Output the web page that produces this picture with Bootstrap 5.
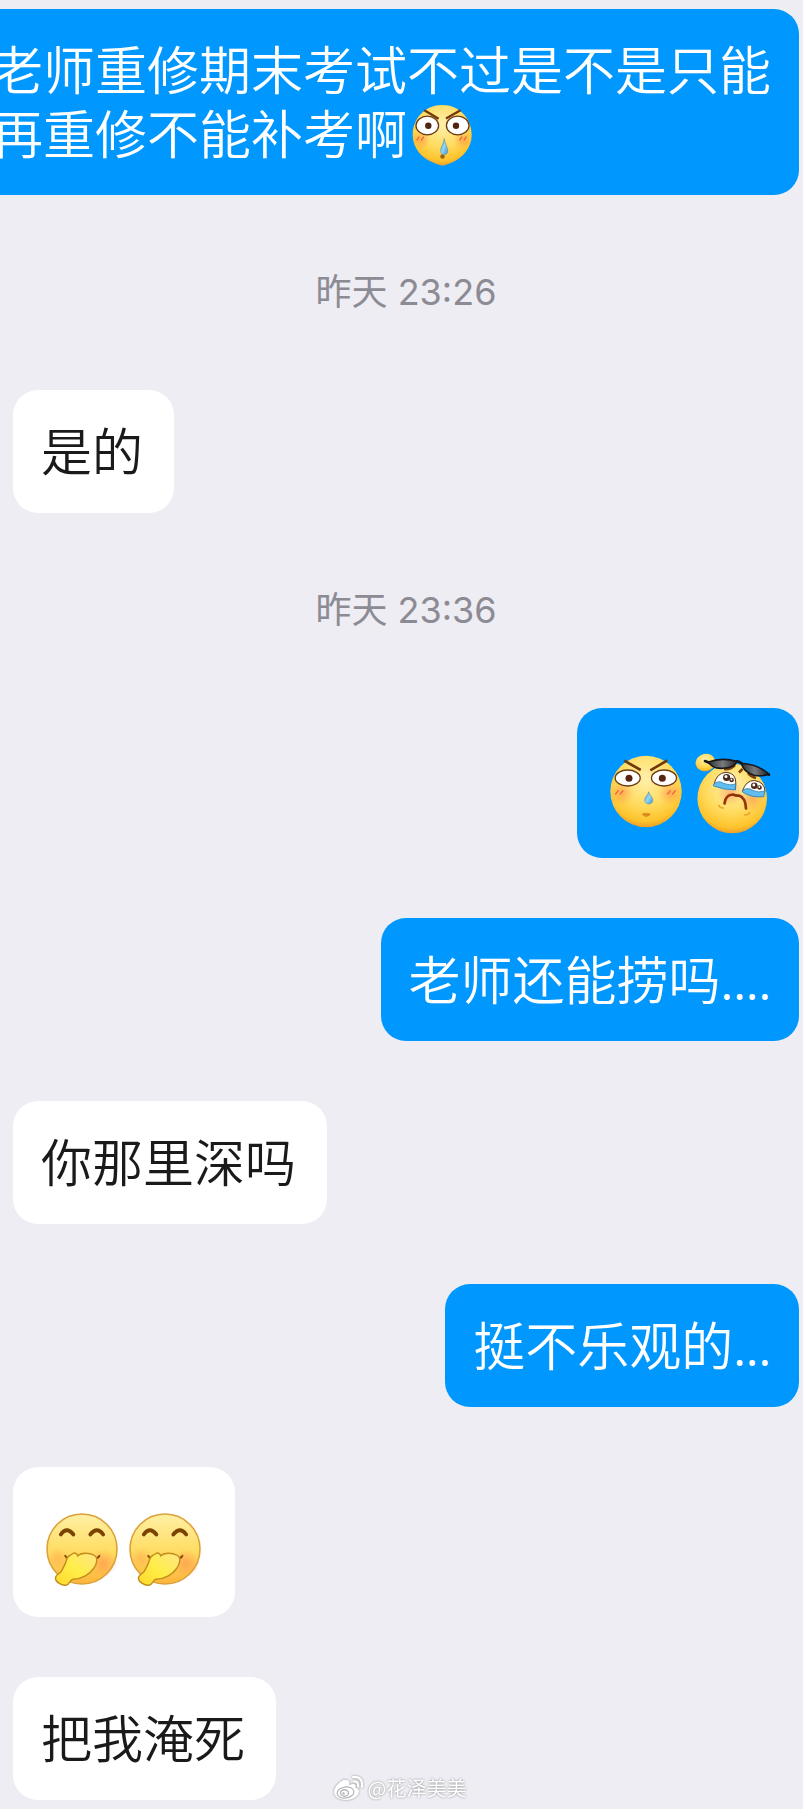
<!DOCTYPE html>
<html lang="zh-CN">
<head>
<meta charset="utf-8">
<meta name="viewport" content="width=device-width, initial-scale=1">
<title>聊天</title>
<link href="https://cdn.jsdelivr.net/npm/bootstrap@5.3.0/dist/css/bootstrap.min.css" rel="stylesheet">
<style>
  body { background: #eeedf3; font-family: "Noto Sans CJK SC", sans-serif; }
  .chat { padding: 9px 4px 9px 13px; gap: 60px; }
  .bubble { padding: 27px 28px 31px; border-radius: 25px; font-size: 52px; line-height: 65px; white-space: nowrap; font-weight: 350; }
  .bubble-in { background: #fff; color: #1a1a1a; font-size: 51px; padding-right: 31px; }
  .bubble-out { background: #0097ff; color: #fff; }
  .bubble-multi { line-height: 64px; }
  .bubble-faces { padding: 29px 28px; }
  .dots { font-family: "Open Sans", sans-serif; font-size: 48px; line-height: 1; font-weight: 400; }
  .stamp { font-family: Inter, "Noto Sans CJK SC", sans-serif; font-size: 36px; line-height: 75px; color: #8c8b93; font-weight: 400; }
  .face { width: 83px; height: 92px; overflow: visible; }
  .face-inline { width: 60px; height: 62px; margin: -15px 0 -5px 5px; overflow: visible; }
  .watermark { bottom: 6px; gap: 4px; padding-right: 4px; font-size: 20px; line-height: 30px; color: #fff; filter: drop-shadow(0 0 1px #8a8a8a); }
</style>
</head>
<body>
<svg width="0" height="0" class="position-absolute" aria-hidden="true">
  <defs>
    <radialGradient id="skin" cx="50%" cy="32%" r="68%">
      <stop offset="0" stop-color="#fff0ae"/><stop offset=".55" stop-color="#ffdc60"/><stop offset=".88" stop-color="#fdc32c"/><stop offset="1" stop-color="#ee9f28"/>
    </radialGradient>
    <linearGradient id="warm" x1="0" y1="0" x2="0" y2="1">
      <stop offset="0" stop-color="#fff0a6"/><stop offset=".55" stop-color="#ffdc60"/><stop offset="1" stop-color="#fdb53c"/>
    </linearGradient>
    <linearGradient id="hand" x1="0" y1="1" x2="1" y2="0">
      <stop offset="0" stop-color="#ffd92a"/><stop offset=".5" stop-color="#ffee4a"/><stop offset="1" stop-color="#ffe48a"/>
    </linearGradient>
    <linearGradient id="drop" x1="0" y1="0" x2="1" y2="1">
      <stop offset="0" stop-color="#5a9fb9"/><stop offset=".5" stop-color="#8fd7fa"/><stop offset="1" stop-color="#3c93d0"/>
    </linearGradient>
    <linearGradient id="lens" x1="0" y1="0" x2="1" y2="0">
      <stop offset="0" stop-color="#333"/><stop offset=".5" stop-color="#777b80"/><stop offset="1" stop-color="#222"/>
    </linearGradient>
    <radialGradient id="blush"><stop offset="0" stop-color="#ff884f" stop-opacity=".55"/><stop offset="1" stop-color="#ff884f" stop-opacity="0"/></radialGradient>
    <symbol id="giggle" viewBox="0 0 83 92" overflow="visible">
      <circle cx="41" cy="53" r="35" fill="url(#warm)" stroke="#dca23a" stroke-width="1.6"/>
      <circle cx="62" cy="67" r="14" fill="url(#blush)"/><circle cx="17" cy="62" r="11" fill="url(#blush)" opacity=".6"/>
      <path d="M19.8 38.5Q25.7 30 32.4 38.5M49.3 38.5Q56 30 62.2 38.5" fill="none" stroke="#7b4300" stroke-width="3.8" stroke-linecap="round"/>
      <path d="M24.5 60.5Q41 73 57.7 60.5" fill="none" stroke="#a4631b" stroke-width="1.4"/>
      <path d="M24.2 59.8l1.4 2M58.4 59.8l-1.6 2" stroke="#8a4c0b" stroke-width="2" stroke-linecap="round"/>
      <path d="M25.5 64C26 60 28.5 60 31.500 57.8C34 55.800 36.500 58 36.500 60C40 56.500 48 56.500 53.500 59.500C57.500 62 56 67 53 72C49 78 41 83 32 83.300C29 83.500 29 88.500 25 89.200C20.500 89.600 14 86 14.500 81.500C15.500 77.500 19 78 20.500 75C22.500 71 24.500 68 25.500 64Z" fill="url(#hand)" stroke="#c48c1a" stroke-width="1.4" stroke-linejoin="round"/>
    </symbol>
  </defs>
</svg>

<main class="chat position-relative d-flex flex-column overflow-hidden">
  <div class="d-flex justify-content-end">
    <div class="bubble bubble-out bubble-multi flex-shrink-0">老师重修期末考试不过是不是只能<br>再重修不能补考啊<svg class="face-inline align-middle" viewBox="0 0 60 62" role="img" aria-label="流鼻涕">
        <path d="M30.200 1C47 1 59.700 14 59.700 31C59.700 44 50 54 41 58C36 60 33 61.500 30.500 61.500C28 61.500 25 60 20 58C10 54 .7 44 .7 31C.7 14 13.500 1 30.200 1Z" fill="url(#skin)"/>
        <circle cx="9" cy="36" r="9" fill="url(#blush)"/><circle cx="51" cy="36" r="9" fill="url(#blush)"/>
        <g fill="#fff" stroke="#6b3a12" stroke-width="1.300"><ellipse cx="15.300" cy="21.500" rx="11.300" ry="9.300"/><ellipse cx="45.700" cy="21.500" rx="11.300" ry="9.300"/></g>
        <circle cx="16.300" cy="21.700" r="3.200" fill="#502411"/><circle cx="44" cy="21.700" r="3.200" fill="#502411"/>
        <path d="M12.300 6.300L26.600 14.800M48.500 6.300L34 14.600" stroke="#71380b" stroke-width="2.300"/>
        <path d="M4.700 36.300l2.500-3.600M9.300 36.300l2.500-3.600M47.500 36.300l2.500-3.600M52 36.300l2.500-3.600" stroke="#e8643c" stroke-width="1.200"/>
        <circle cx="30.500" cy="52.500" r="2.200" fill="#a1600f"/>
        <path d="M32.200 34.500C33 40 35.800 43 35.800 47C35.800 52 28.600 52 28.600 47C28.600 43 31.500 40 32.200 34.500Z" fill="url(#drop)" stroke="#62808c" stroke-width=".5"/>
      </svg></div>
  </div>

  <time class="stamp text-center">昨天 23:26</time>

  <div class="d-flex"><div class="bubble bubble-in">是的</div></div>

  <time class="stamp text-center">昨天 23:36</time>

  <div class="d-flex justify-content-end">
    <div class="bubble bubble-out bubble-faces d-flex">
      <svg class="face" viewBox="0 0 83 92" role="img" aria-label="流鼻涕">
        <circle cx="41" cy="54.500" r="35.700" fill="url(#skin)"/>
        <circle cx="17" cy="56" r="12" fill="url(#blush)"/><circle cx="65" cy="56" r="12" fill="url(#blush)"/>
        <g fill="#fff" stroke="#6b3a12" stroke-width="1.300"><ellipse cx="22.700" cy="41" rx="12.500" ry="8"/><ellipse cx="59" cy="41" rx="12.500" ry="8"/></g>
        <circle cx="24" cy="41.300" r="3.500" fill="#582412"/><circle cx="57.300" cy="41.300" r="3.500" fill="#582412"/>
        <path d="M19.300 23.700L35.700 33M62.300 23.500L45.300 33.300" stroke="#71380b" stroke-width="2.600"/>
        <path d="M10.300 57.300l3.200-4M15 57.300l3.200-4M62.300 57.300l3.200-4M67.300 57.300l3.200-4" stroke="#e8643c" stroke-width="1.300"/>
        <path d="M43.700 54.800C44.700 58.500 47.800 60 47.800 63.300C47.800 68.200 39.600 68.200 39.600 63.300C39.600 60 42.700 58.500 43.700 54.800Z" fill="url(#drop)" stroke="#62808c" stroke-width=".5"/>
        <path d="M36.800 77Q39.500 75.300 41.300 76.300Q43 75.300 45.800 77Q41.300 83 36.800 77Z" fill="#d98b1d"/>
      </svg>
      <svg class="face" viewBox="0 0 83 92" role="img" aria-label="墨镜流泪">
        <ellipse cx="17.500" cy="25.500" rx="10" ry="8.600" transform="rotate(-12 17.500 25.500)" fill="url(#skin)"/>
        <circle cx="44.200" cy="61.500" r="34.800" fill="url(#skin)"/>
        <circle cx="42" cy="56" r="13" fill="url(#blush)"/><circle cx="64" cy="62" r="12" fill="url(#blush)"/>
        <path d="M36 32Q42 33 47 28M51 35.500L54.500 32M60 36Q63 40 68 41" fill="none" stroke="#7a4210" stroke-width="2.600"/>
        <path d="M26 47.500Q28.500 36 38 35.300Q47.500 36 47.800 45L47.500 52.500Q36 52 26 47.500Z" fill="#fff" stroke="#5c3418" stroke-width="1"/>
        <path d="M25.500 47.500Q30 42.500 36 46.500Q42 49 47.700 47L47.300 52.900Q36 53 25.500 49Z" fill="#61bdf0" stroke="#2d7fad" stroke-width=".8"/>
        <path d="M54.500 54Q58 43.200 66.500 43.500Q76.500 45 77 54Q74 59.800 70 59.500Q60 58.500 54.500 54Z" fill="#fff" stroke="#5c3418" stroke-width="1"/>
        <path d="M54.500 54Q59 49.500 65 53.500Q70 56 77 54L75.800 59.700Q63 61 54.500 55Z" fill="#61bdf0" stroke="#2d7fad" stroke-width=".8"/>
        <g fill="#4e2a18"><circle cx="38.600" cy="40.500" r="3.600"/><circle cx="43.600" cy="43" r="2.300"/><circle cx="66.300" cy="48.800" r="3.300"/><circle cx="71.500" cy="50.500" r="2.300"/></g>
        <g fill="#fff"><circle cx="38" cy="39.500" r="1.500"/><circle cx="43.500" cy="42.500" r=".9"/><circle cx="65.800" cy="48" r="1.400"/><circle cx="71.300" cy="50" r=".9"/></g>
        <path d="M36.500 66.500Q37.500 57.800 45 57.500Q48.500 59 51 58.500Q57.500 60.500 58 71.500" fill="none" stroke="#94320c" stroke-width="2.700" stroke-linecap="round" stroke-linejoin="round"/>
        <path d="M30.500 68Q32 71.500 36 71M56 77.500Q60 79 62 75" fill="none" stroke="#eea52d" stroke-width="1.600"/>
        <path d="M17 24L23 26.500M46 25Q51 23 55 28M77 36L81 37.800" fill="none" stroke="#15171b" stroke-width="2.600" stroke-linecap="round"/>
        <path d="M20.500 25Q34 20 49 24.500Q46 31 35 31.300Q24 32 20.500 25Z" fill="url(#lens)" stroke="#15171b" stroke-width="1.600"/>
        <path d="M53.500 26.500Q68 26.500 80.500 36.500Q76 40 66 38.200Q55.500 35 53.500 26.500Z" fill="url(#lens)" stroke="#15171b" stroke-width="1.600"/>
      </svg>
    </div>
  </div>

  <div class="d-flex justify-content-end"><div class="bubble bubble-out">老师还能捞吗<span class="dots">....</span></div></div>

  <div class="d-flex"><div class="bubble bubble-in">你那里深吗</div></div>

  <div class="d-flex justify-content-end"><div class="bubble bubble-out">挺不乐观的<span class="dots">...</span></div></div>

  <div class="d-flex">
    <div class="bubble bubble-in bubble-faces d-flex">
      <svg class="face" role="img" aria-label="偷笑"><use href="#giggle"/></svg>
      <svg class="face" role="img" aria-label="偷笑"><use href="#giggle"/></svg>
    </div>
  </div>

  <div class="d-flex"><div class="bubble bubble-in">把我淹死</div></div>

  <div class="watermark position-absolute start-0 end-0 d-flex justify-content-center align-items-center">
    <svg width="31" height="26" viewBox="0 0 31 26" aria-hidden="true">
      <path d="M13 5C10 3 1 11 1 17C1 22 7 25 13 25C21 25 26 20 26 16.500C26 14 24 13 22.500 12.500C23.500 9 21 8 16 10C17 7 16 5 13 5Z" fill="#fff"/>
      <ellipse cx="12.500" cy="17.500" rx="8.500" ry="5.500" fill="none" stroke="#b4b4ba" stroke-width="1.200" transform="rotate(-8 12.500 17.500)"/>
      <ellipse cx="11.500" cy="18" rx="4" ry="3.300" fill="none" stroke="#b4b4ba" stroke-width="1.400"/>
      <circle cx="10.500" cy="18.500" r="1.200" fill="#b4b4ba"/>
      <path d="M20.500 6.500Q25.500 6 25 11.500M20 2Q30 1 29 12" fill="none" stroke="#fff" stroke-width="2.200" stroke-linecap="round"/>
    </svg>
    <span>@花泽美美</span>
  </div>
</main>
<script src="https://cdn.jsdelivr.net/npm/bootstrap@5.3.0/dist/js/bootstrap.bundle.min.js"></script>
</body>
</html>
